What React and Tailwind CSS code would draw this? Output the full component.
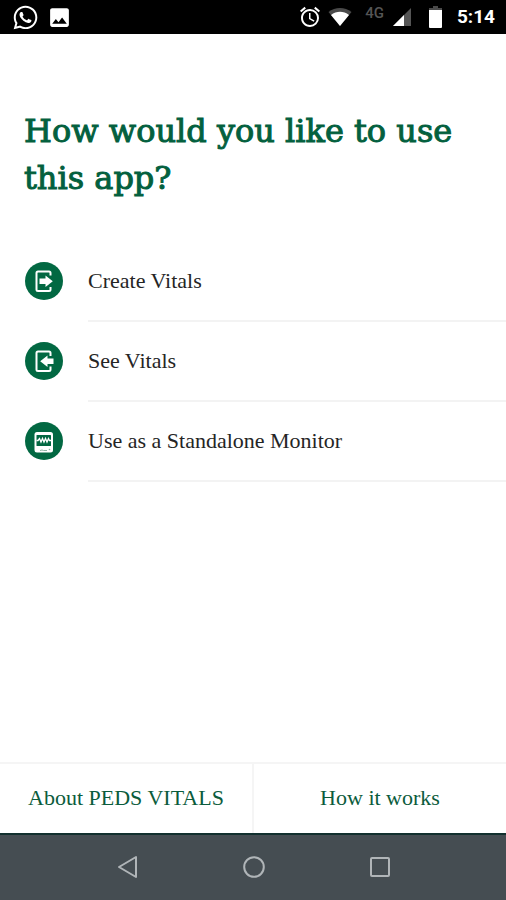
import React from "react";
import { MdImage, MdAlarm } from "react-icons/md";
import { FaWhatsapp } from "react-icons/fa";

function WifiIcon() {
  return (
    <svg className="h-5 w-6" viewBox="0 0 24 20" aria-hidden="true">
      <path d="M12 19 0.5 5C7 -0.2 17 -0.2 23.500 5Z" fill="#4a4a4a" />
      <path d="M12 19 3 8C8.500 3.800 15.500 3.800 21 8Z" fill="#fff" />
    </svg>
  );
}

function SignalIcon() {
  return (
    <svg className="h-[18px] w-[18px]" viewBox="0 0 18 18" aria-hidden="true">
      <path d="M0 18 18 0V18Z" fill="#555" />
      <path d="M0 18 11 7V18Z" fill="#fff" />
    </svg>
  );
}

function BatteryIcon() {
  return (
    <svg className="h-[22px] w-[13px]" viewBox="0 0 13 22" aria-hidden="true">
      <path d="M4 0h5v2h4v3H0V2h4Z" fill="#4a4a4a" />
      <path d="M0 4h13v17a1 1 0 0 1-1 1H1a1 1 0 0 1-1-1Z" fill="#fff" />
    </svg>
  );
}

function CreateIcon() {
  return (
    <svg className="size-[38px]" viewBox="0 0 38 38" fill="none" aria-hidden="true">
      <path d="M25.500 13.500V11A1.500 1.500 0 0 0 24 9.500H13A1.500 1.500 0 0 0 11.500 11V27.500A1.500 1.500 0 0 0 13 29H24A1.500 1.500 0 0 0 25.500 27.500V25" stroke="#fff" strokeWidth="2" />
      <path d="M14.500 16.500H20.500V13.500L27.800 19.200 20.500 25V22H14.500Z" fill="#fff" />
    </svg>
  );
}

function SeeIcon() {
  return (
    <svg className="size-[38px]" viewBox="0 0 38 38" fill="none" aria-hidden="true">
      <path d="M25.500 14V11A1.500 1.500 0 0 0 24 9.500H13A1.500 1.500 0 0 0 11.500 11V27.500A1.500 1.500 0 0 0 13 29H24A1.500 1.500 0 0 0 25.500 27.500V24.500" stroke="#fff" strokeWidth="2" />
      <path d="M28.500 16.500H22.500V13.500L15.200 19.200 22.500 25V22H28.500Z" fill="#fff" />
    </svg>
  );
}

function MonitorIcon() {
  return (
    <svg className="size-[38px]" viewBox="0 0 38 38" fill="none" aria-hidden="true">
      <rect x="9.500" y="10" width="18.500" height="20.500" rx="2.500" fill="#fff" />
      <rect x="11.500" y="13" width="14.500" height="11" rx="0.500" fill="#026842" />
      <path d="M11.500 18.500H13L14.500 16.500 16 20 17.500 16.500 19 20 20.500 16.500 22 20 23.500 16.500 24.500 18.500H26" stroke="#fff" strokeWidth="1.300" />
      <path d="M15 28.500 17 28 18.500 28.500H22" stroke="#8fb5a5" strokeWidth="1" />
      <circle cx="24.500" cy="27.500" r="0.800" fill="#8fb5a5" />
    </svg>
  );
}

const options = [
  { label: "Create Vitals", Icon: CreateIcon },
  { label: "See Vitals", Icon: SeeIcon },
  { label: "Use as a Standalone Monitor", Icon: MonitorIcon },
];

export default function App() {
  return (
    <div className="flex min-h-screen flex-col bg-white font-['Liberation_Serif',serif]">
      <header className="flex h-[34px] items-center bg-black pr-[11px] pl-[12px] text-white">
        <FaWhatsapp className="size-[27px]" />
        <MdImage className="ml-[8px] size-[25px]" />
        <div className="ml-auto flex items-center">
          <MdAlarm className="size-6" />
          <span className="ml-[6px]"><WifiIcon /></span>
          <span className="mb-[8px] ml-[13px] font-[Roboto,sans-serif] text-[15px] leading-4 font-medium text-[#555]">4G</span>
          <span className="ml-[9px]"><SignalIcon /></span>
          <span className="ml-[18px]"><BatteryIcon /></span>
          <span className="ml-[15px] font-[Roboto,sans-serif] text-[19px] leading-6 font-bold">5:14</span>
        </div>
      </header>

      <main className="flex-1 pt-[74px]">
        <h1 className="px-6 font-['DejaVu_Serif',serif] text-[32px] leading-[47px] font-normal text-[#03603e] [-webkit-text-stroke:1px_#03603e]">
          How would you like to use this app?
        </h1>
        <ul className="mt-10">
          {options.map(({ label, Icon }) => (
            <li key={label}>
              <button type="button" className="flex h-[78px] w-full items-center gap-[25px] pl-[25px] text-left">
                <span className="flex size-[38px] shrink-0 items-center justify-center rounded-full bg-[#026842]">
                  <Icon />
                </span>
                <span className="text-[22px] leading-6 text-[#252525]">{label}</span>
              </button>
              <div className="ml-[88px] h-[2px] bg-[#f3f3f3]" />
            </li>
          ))}
        </ul>
      </main>

      <div className="flex h-[71px] border-t-2 border-[#f5f5f5] text-[22px] leading-6 text-[#0b5c3c]">
        <button type="button" className="flex-1 border-r-2 border-[#f5f5f5] pb-[2px]">About PEDS VITALS</button>
        <button type="button" className="flex-1 pb-[2px]">How it works</button>
      </div>

      <nav className="flex h-[67px] items-center justify-center gap-[102px] border-t-2 border-[#12302f] bg-[#454d52] pb-[2px] pl-[2px]">
        <button type="button" aria-label="Back">
          <svg className="size-6" viewBox="0 0 24 24" fill="none" stroke="#b0b5b8" strokeWidth="2" strokeLinejoin="round">
            <path d="M20 2V22L3 12Z" />
          </svg>
        </button>
        <button type="button" aria-label="Home">
          <svg className="size-6" viewBox="0 0 24 24" fill="none" stroke="#b0b5b8" strokeWidth="2">
            <circle cx="12" cy="12" r="9.800" />
          </svg>
        </button>
        <button type="button" aria-label="Recent apps">
          <svg className="size-6" viewBox="0 0 24 24" fill="none" stroke="#b0b5b8" strokeWidth="2">
            <rect x="3" y="3" width="18" height="18" rx="1" />
          </svg>
        </button>
      </nav>
    </div>
  );
}
